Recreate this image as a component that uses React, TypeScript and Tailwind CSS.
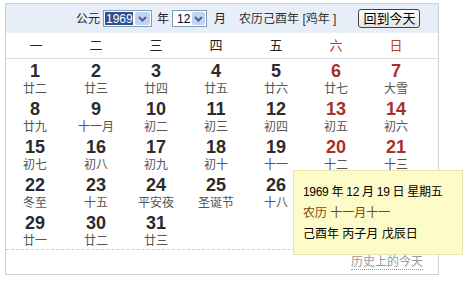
import React from 'react';

type Day = { d: number; lunar: string };

const weekNames = ['一', '二', '三', '四', '五', '六', '日'];

// December 1969 starts on a Monday
const days: Day[] = [
  { d: 1, lunar: '廿二' }, { d: 2, lunar: '廿三' }, { d: 3, lunar: '廿四' }, { d: 4, lunar: '廿五' },
  { d: 5, lunar: '廿六' }, { d: 6, lunar: '廿七' }, { d: 7, lunar: '大雪' },
  { d: 8, lunar: '廿九' }, { d: 9, lunar: '十一月' }, { d: 10, lunar: '初二' }, { d: 11, lunar: '初三' },
  { d: 12, lunar: '初四' }, { d: 13, lunar: '初五' }, { d: 14, lunar: '初六' },
  { d: 15, lunar: '初七' }, { d: 16, lunar: '初八' }, { d: 17, lunar: '初九' }, { d: 18, lunar: '初十' },
  { d: 19, lunar: '十一' }, { d: 20, lunar: '十二' }, { d: 21, lunar: '十三' },
  { d: 22, lunar: '冬至' }, { d: 23, lunar: '十五' }, { d: 24, lunar: '平安夜' }, { d: 25, lunar: '圣诞节' },
  { d: 26, lunar: '十八' }, { d: 27, lunar: '十九' }, { d: 28, lunar: '二十' },
  { d: 29, lunar: '廿一' }, { d: 30, lunar: '廿二' }, { d: 31, lunar: '廿三' },
];

const cjk = "font-['Liberation_Sans','Noto_Sans_CJK_SC',sans-serif]";

const Chevron: React.FC = () => (
  <svg width="9" height="6" viewBox="0 0 9 6">
    <path d="M1 1 L4.5 4.5 L8 1" fill="none" stroke="#3f64a6" strokeWidth="2" />
  </svg>
);

const FakeSelect: React.FC<{ value: string; width: string; selected?: boolean }> = ({ value, width, selected }) => (
  <div className={`flex h-[17px] items-stretch border border-[#7f9db9] bg-white ${width}`}>
    <div className="flex flex-1 items-center p-[1px]">
      <span
        className={
          selected
            ? 'flex h-full w-full items-center bg-[#2f4f8f] pl-[1px] text-[12px] text-white'
            : 'pl-[3px] text-[12px] text-black'
        }
      >
        {value}
      </span>
    </div>
    <div className="m-[1px] flex w-[16px] items-center justify-center rounded-[2px] bg-[#c3d3ef]">
      <Chevron />
    </div>
  </div>
);

const App: React.FC = () => {
  return (
    <div className={`relative h-[285px] w-[469px] bg-white ${cjk}`}>
      <div className="ml-[5px] pt-[3px]">
        <div className="w-[434px] border border-[#c9d1dc]">
          {/* toolbar */}
          <div className="flex h-[29px] items-center bg-[#e8eef8] pl-[70px] text-[12px] text-[#222]">
            <span>公元</span>
            <div className="ml-[3px]">
              <FakeSelect value="1969" width="w-[49px]" selected />
            </div>
            <span className="ml-[5px]">年</span>
            <div className="ml-[3px]">
              <FakeSelect value="12" width="w-[35px]" />
            </div>
            <span className="ml-[7px]">月</span>
            <span className="ml-[13px] text-[#333]">农历己酉年 [鸡年 ]</span>
            <button className="ml-[22px] h-[19px] w-[62px] rounded-[3px] border border-[#444] bg-gradient-to-b from-white to-[#e4e4e4] text-[13px] leading-none text-black">
              回到今天
            </button>
          </div>

          {/* weekday header */}
          <div className="grid h-[26px] grid-cols-[repeat(7,60px)] border-b border-[#d9dde3] text-[13px]">
            {weekNames.map((w, i) => (
              <div key={w} className={`flex items-center justify-center ${i >= 5 ? 'text-[#c0392b]' : 'text-[#222]'}`}>
                {w}
              </div>
            ))}
          </div>

          {/* days */}
          <div className="mx-[2px] grid h-[191px] grid-cols-[repeat(7,60px)] grid-rows-[repeat(5,38px)] border-b border-dashed border-[#cfcfcf] -ml-0">
            {days.map((day, i) => {
              const weekend = i % 7 >= 5;
              return (
                <div key={day.d} className={`flex flex-col items-center ${i % 7 === 0 ? '-ml-[2px]' : ''}`}>
                  <span
                    className={`mt-[2px] h-[20px] font-['Liberation_Sans',sans-serif] text-[18px] leading-[20px] font-bold ${
                      weekend ? 'text-[#a8302b]' : 'text-[#2b2b2b]'
                    }`}
                  >
                    {day.d}
                  </span>
                  <span className="text-[12px] leading-[16px] text-[#555]">{day.lunar}</span>
                </div>
              );
            })}
          </div>

          {/* footer */}
          <div className="flex h-[24px] items-center justify-end pr-[15px]">
            <span className="border-b border-dotted border-[#999] text-[12px] leading-[14px] text-[#999]">历史上的今天</span>
          </div>
        </div>
      </div>

      {/* date tooltip */}
      <div className="absolute left-[293px] top-[170px] h-[85px] w-[170px] border border-[#ebe5a8] bg-[#fdfbc7] pl-[9px] pt-[11px] text-[12px] leading-[21px]">
        <div className="tracking-[-0.3px] text-black">1969 年 12 月 19 日 星期五</div>
        <div className="text-[#7b4a12]">农历 十一月十一</div>
        <div className="text-black">己酉年 丙子月 戊辰日</div>
      </div>
    </div>
  );
};

export default App;
